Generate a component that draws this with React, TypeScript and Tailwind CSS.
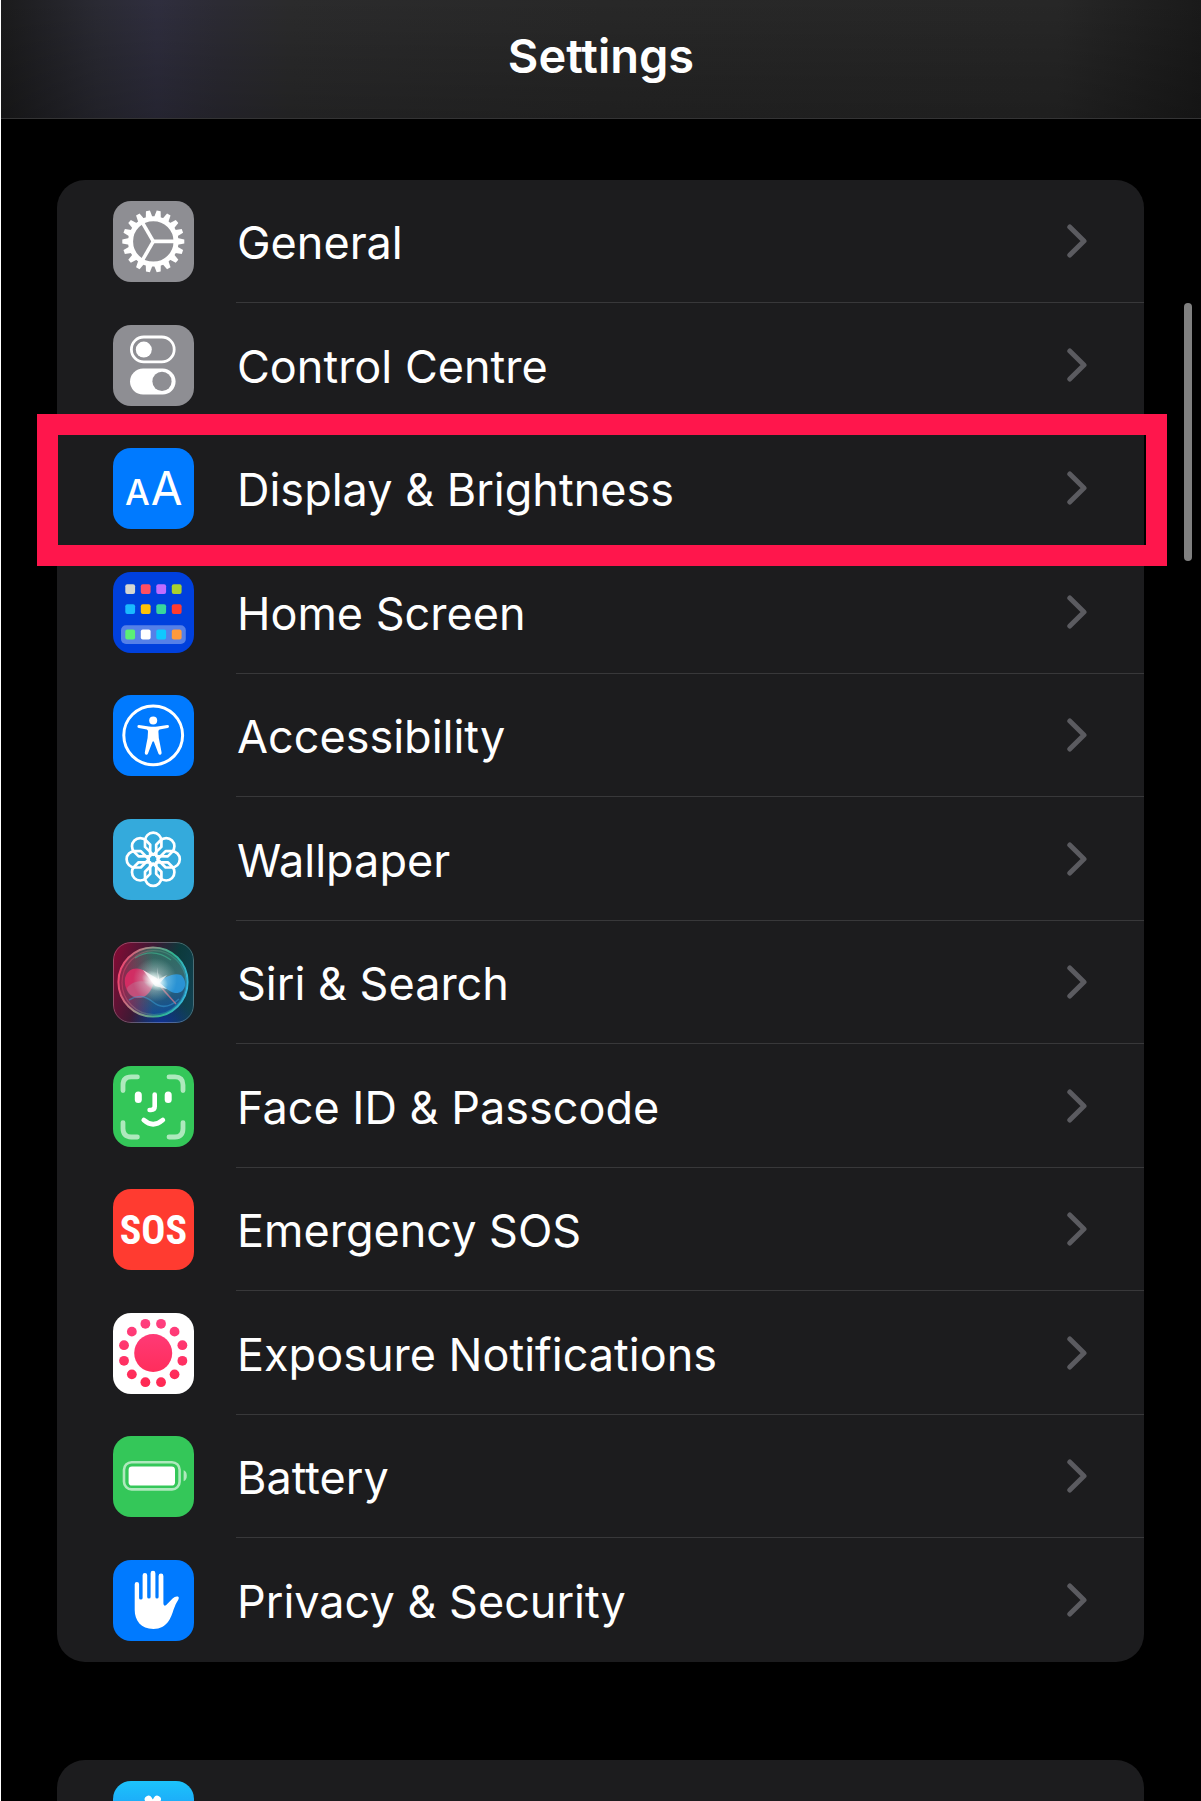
import type { ReactNode } from "react";

const GearIcon = () => (
  <svg viewBox="0 0 81 81" className="size-full">
    <rect width="81" height="81" fill="#8e8e93" />
    <g transform="translate(40.3 40.4)" stroke="#fff" fill="none">
      {Array.from({ length: 18 }, (_, i) => (
        <path key={i} d="M23 -3.6 L31 -2 V2 L23 3.6 Z" fill="#fff" stroke="none" transform={`rotate(${i * 20})`} />
      ))}
      <circle r="22.7" strokeWidth="5" />
      {[0, 120, 240].map((a) => (
        <path key={a} d="M0 0 H22" strokeWidth="3.6" transform={`rotate(${a})`} />
      ))}
    </g>
  </svg>
);

const TogglesIcon = () => (
  <svg viewBox="0 0 81 81" className="size-full">
    <rect width="81" height="81" fill="#8e8e93" />
    <rect x="18.4" y="12" width="42.8" height="24.8" rx="12.4" fill="none" stroke="#fff" strokeWidth="2.8" />
    <circle cx="30.8" cy="24.6" r="8" fill="#fff" />
    <rect x="17" y="43.6" width="45.6" height="26" rx="13" fill="#fff" />
    <circle cx="49" cy="56.4" r="9.6" fill="#8e8e93" />
  </svg>
);

const DisplayIcon = () => (
  <svg viewBox="0 0 81 81" className="size-full">
    <rect width="81" height="81" fill="#007aff" />
    <g fill="#fff" textAnchor="middle" className="font-['Inter',sans-serif]">
      <text x="24.4" y="57" fontSize="35" className="font-medium">A</text>
      <text x="53.6" y="57" fontSize="46">A</text>
    </g>
  </svg>
);

const homeApps = [
  ["#d5d6d1", "#ff4f63", "#bf6cff", "#a9d02f"],
  ["#19b9ff", "#ffc107", "#38d79c", "#ff3b2f"],
  ["#5bf075", "#ffffff", "#10c8ff", "#ff9a3c"],
];

const HomeIcon = () => (
  <svg viewBox="0 0 81 81" className="size-full">
    <rect width="81" height="81" fill="#0040dd" />
    <rect x="8" y="53.2" width="64.8" height="18.8" rx="5" fill="#5580e8" />
    {homeApps.map((row, r) =>
      row.map((color, c) => (
        <rect key={`${r}-${c}`} x={12.3 + c * 15.5} y={[12.3, 32.2, 57.6][r]} width="9.8" height="9.8" rx="2" fill={color} />
      ))
    )}
  </svg>
);

const AccessibilityIcon = () => (
  <svg viewBox="0 0 81 81" className="size-full">
    <rect width="81" height="81" fill="#007aff" />
    <circle cx="40.2" cy="40.3" r="29.4" fill="none" stroke="#fff" strokeWidth="3" />
    <circle cx="40.2" cy="25.4" r="4" fill="#fff" />
    <path
      d="M26 30 L36 31.6 Q40.2 32 44.4 31.6 L54.4 30 Q56 30 56 31.4 Q56 32.8 54.6 33.1 L46.6 34.6 Q45.4 35 45.4 36.4 Q45.4 43 47 49 L48.6 57.6 Q48.8 59.4 47.4 59.7 Q46 60 45.4 58.4 L41 47 Q40.2 45.6 39.4 47 L35 58.4 Q34.4 60 33 59.7 Q31.6 59.4 31.8 57.6 L33.4 49 Q35 43 35 36.4 Q35 35 33.8 34.6 L25.8 33.1 Q24.4 32.8 24.4 31.4 Q24.4 30 26 30 Z"
      fill="#fff"
    />
  </svg>
);

const WallpaperIcon = () => (
  <svg viewBox="0 0 81 81" className="size-full">
    <rect width="81" height="81" fill="#34aadc" />
    <g transform="translate(40.2 40.3)" fill="none" stroke="#fff" strokeWidth="2.7" strokeLinejoin="round">
      {Array.from({ length: 8 }, (_, i) => (
        <path key={i} d="M0 -4.4 L-8.2 -12.4 V-18.4 A8.2 8.2 0 0 1 8.2 -18.4 V-12.4 Z" transform={`rotate(${i * 45})`} />
      ))}
      <circle r="4.8" />
    </g>
  </svg>
);

const SiriIcon = () => (
  <svg viewBox="0 0 81 81" className="size-full">
    <defs>
      <linearGradient id="siriBg" x1="0" y1="0.3" x2="1" y2="0.6">
        <stop offset="0" stopColor="#7d0c34" />
        <stop offset="0.4" stopColor="#3a1a34" />
        <stop offset="0.7" stopColor="#0c3a3c" />
        <stop offset="1" stopColor="#10404f" />
      </linearGradient>
      <linearGradient id="siriBase" x1="0.3" y1="0" x2="0.6" y2="1">
        <stop offset="0" stopColor="#2c7361" />
        <stop offset="0.5" stopColor="#3f7276" />
        <stop offset="1" stopColor="#0f4f9c" />
      </linearGradient>
      <linearGradient id="siriSide" x1="0" y1="0" x2="1" y2="0">
        <stop offset="0" stopColor="#a01a48" stopOpacity="0.9" />
        <stop offset="0.5" stopColor="#a01a48" stopOpacity="0" />
      </linearGradient>
      <linearGradient id="siriRim" x1="0" y1="0.4" x2="1" y2="0.6">
        <stop offset="0" stopColor="#f0446f" />
        <stop offset="0.3" stopColor="#a88c88" />
        <stop offset="0.7" stopColor="#2fb48e" />
        <stop offset="1" stopColor="#35b6df" />
      </linearGradient>
      <radialGradient id="siriGlow">
        <stop offset="0" stopColor="#fff" />
        <stop offset="0.3" stopColor="#fff" stopOpacity="0.85" />
        <stop offset="1" stopColor="#c8fff0" stopOpacity="0" />
      </radialGradient>
      <radialGradient id="siriNavy">
        <stop offset="0" stopColor="#12309a" />
        <stop offset="1" stopColor="#12309a" stopOpacity="0" />
      </radialGradient>
    </defs>
    <rect width="81" height="81" fill="url(#siriBg)" />
    <circle cx="48" cy="84" r="32" fill="url(#siriNavy)" />
    <circle cx="40" cy="40" r="34" fill="url(#siriBase)" fillOpacity="0.85" />
    <circle cx="40" cy="40" r="34" fill="url(#siriSide)" />
    <path d="M41 38 C32 24 16 22 12 36 C10 50 22 60 32 54 C38 50 40 43 41 38 Z" fill="#e22c66" fillOpacity="0.85" />
    <path d="M14 46 C22 36 34 40 41 41 C38 50 34 55 27 56 C19 56 14 52 14 46 Z" fill="#b8708f" fillOpacity="0.5" />
    <path d="M41 41 C52 36 60 30 68 33 C76 40 72 52 62 51 C56 50 52 44 41 41 Z" fill="#2a9be4" fillOpacity="0.85" />
    <path d="M16 58 Q28 50 40 60 T66 57" fill="none" stroke="#37a0d8" strokeOpacity="0.5" strokeWidth="1.6" />
    <path d="M48 45 L63 62 L52 50 Z" fill="#c97a90" stroke="#c97a90" strokeOpacity="0.7" strokeWidth="1.4" />
    <path d="M22 16 Q40 5 58 18" fill="none" stroke="#3fae8b" strokeOpacity="0.7" strokeWidth="1.2" />
    <circle cx="42" cy="38" r="22" fill="url(#siriGlow)" fillOpacity="0.5" />
    <ellipse cx="42" cy="39" rx="14" ry="9" fill="url(#siriGlow)" transform="rotate(28 42 39)" />
    <path d="M30 28 L45 37 L44 25 L46 37 L54 33 L47 41 L54 47 L42 44 Z" fill="#fff" fillOpacity="0.7" />
    <circle cx="40" cy="40" r="34.6" fill="none" stroke="url(#siriRim)" strokeWidth="2" />
    <circle cx="41" cy="40.6" r="32" fill="none" stroke="url(#siriRim)" strokeOpacity="0.4" strokeWidth="1.2" />
    <rect x="0.5" y="0.5" width="80" height="80" rx="17.5" fill="none" stroke="#fff" strokeOpacity="0.25" />
  </svg>
);

const FaceIdIcon = () => (
  <svg viewBox="0 0 81 81" className="size-full">
    <rect width="81" height="81" fill="#34c759" />
    <g fill="none" strokeLinecap="round">
      <path
        d="M10 24.6 V19 Q10 10.9 18.2 10.9 H24.4 M56 10.9 H62 Q70 10.9 70 19 V24.6 M70 56.6 V62.6 Q70 71 62 71 H56 M24.4 71 H18.2 Q10 71 10 62.6 V56.6"
        stroke="#aee9bd"
        strokeWidth="4.8"
      />
      <path d="M41.7 28.6 V40.6 Q41.7 44 38 44 H36.6" stroke="#fff" strokeWidth="4.6" />
      <path d="M30.8 54 Q40 62.4 49.8 54" stroke="#fff" strokeWidth="4.8" />
    </g>
    <rect x="21.8" y="25.6" width="7" height="11.4" rx="3.5" fill="#fff" />
    <rect x="51.7" y="25.6" width="7" height="11.4" rx="3.5" fill="#fff" />
  </svg>
);

const SosIcon = () => (
  <svg viewBox="0 0 81 81" className="size-full">
    <rect width="81" height="81" fill="#ff3b30" />
    <text
      x="40.4"
      y="55"
      fontSize="40"
      textAnchor="middle"
      fill="#fff"
      className="font-['Roboto_Condensed','Roboto',sans-serif] font-bold"
    >
      SOS
    </text>
  </svg>
);

const ExposureIcon = () => (
  <svg viewBox="0 0 81 81" className="size-full">
    <defs>
      <linearGradient id="exposure" gradientUnits="userSpaceOnUse" x1="0" y1="6" x2="0" y2="75">
        <stop offset="0" stopColor="#ff3f80" />
        <stop offset="1" stopColor="#ff2851" />
      </linearGradient>
    </defs>
    <rect width="81" height="81" fill="#fff" />
    <circle cx="40.2" cy="40" r="19" fill="url(#exposure)" />
    {Array.from({ length: 12 }, (_, i) => {
      const a = ((15 + i * 30) * Math.PI) / 180;
      return <circle key={i} cx={40.2 + 30.2 * Math.cos(a)} cy={40 + 30.2 * Math.sin(a)} r="4.9" fill="url(#exposure)" />;
    })}
  </svg>
);

const BatteryIcon = () => (
  <svg viewBox="0 0 81 81" className="size-full">
    <rect width="81" height="81" fill="#34c759" />
    <rect x="11" y="26.2" width="55.6" height="27.2" rx="7.6" fill="none" stroke="#aee9bd" strokeWidth="2.6" />
    <rect x="15.6" y="30.6" width="46.4" height="19" rx="3.4" fill="#fff" />
    <path d="M70.6 34.3 Q73.8 35.6 73.8 39.8 Q73.8 44 70.6 45.3 Z" fill="#aee9bd" />
  </svg>
);

const HandIcon = () => (
  <svg viewBox="0 0 81 81" className="size-full">
    <rect width="81" height="81" fill="#007aff" />
    <path
      d="M21.7 24.2 a2.2 2.2 0 0 1 4.4 0 V38 Q26.1 39.6 27.9 39.6 Q29.6 39.6 29.6 38 V15.2 a2.3 2.3 0 0 1 4.6 0 V37 Q34.2 38.6 35.9 38.6 Q37.6 38.6 37.6 37 V13.2 a2.4 2.4 0 0 1 4.8 0 V37 Q42.4 38.6 44 38.6 Q45.6 38.6 45.6 37 V16 a2.4 2.4 0 0 1 4.8 0 V43.6 Q50.6 46.6 53 45.2 L59.6 38.4 Q62.4 35.8 65 36.6 Q66.6 37.4 65.4 39.6 Q63 43 60.6 49.6 C58 57.6 54.6 69 40.4 69 C28 69 21.7 60.4 21.7 50 Z"
      fill="#fff"
    />
  </svg>
);

const StoreIcon = () => (
  <svg viewBox="0 0 81 81" className="size-full">
    <defs>
      <linearGradient id="store" x1="0" y1="0" x2="0" y2="1">
        <stop offset="0" stopColor="#1cc3fb" />
        <stop offset="1" stopColor="#1d70f2" />
      </linearGradient>
    </defs>
    <rect width="81" height="81" fill="url(#store)" />
    <path d="M35.4 18.4 L56 55 M44.2 18.4 L24 54 M14 48 H44 M56 48 H66 M20 59 L18 62" fill="none" stroke="#fff" strokeWidth="7.4" strokeLinecap="round" />
  </svg>
);

const Chevron = () => (
  <svg viewBox="0 0 20 34" className="h-[34px] w-5 shrink-0" fill="none" stroke="#5b5b60" strokeWidth="5" strokeLinecap="round" strokeLinejoin="round">
    <path d="M2.8 3 L17 17 L2.8 31" />
  </svg>
);

type Item = { label: string; icon: ReactNode; highlighted?: boolean };

const items: Item[] = [
  { label: "General", icon: <GearIcon /> },
  { label: "Control Centre", icon: <TogglesIcon /> },
  { label: "Display & Brightness", icon: <DisplayIcon />, highlighted: true },
  { label: "Home Screen", icon: <HomeIcon /> },
  { label: "Accessibility", icon: <AccessibilityIcon /> },
  { label: "Wallpaper", icon: <WallpaperIcon /> },
  { label: "Siri & Search", icon: <SiriIcon /> },
  { label: "Face ID & Passcode", icon: <FaceIdIcon /> },
  { label: "Emergency SOS", icon: <SosIcon /> },
  { label: "Exposure Notifications", icon: <ExposureIcon /> },
  { label: "Battery", icon: <BatteryIcon /> },
  { label: "Privacy & Security", icon: <HandIcon /> },
];

const IconTile = ({ children }: { children: ReactNode }) => (
  <span className="size-[81px] shrink-0 overflow-hidden rounded-[18px]" aria-hidden="true">
    {children}
  </span>
);

const SettingsRow = ({ item }: { item: Item }) => (
  <li className="group relative h-[123px] even:h-[124px]">
    <button type="button" className="flex h-full w-full items-center gap-[42px] pl-14 text-left">
      <IconTile>{item.icon}</IconTile>
      <span className="flex h-full min-w-0 flex-1 items-center justify-between border-b border-[#38383a] pr-[57px] group-last:border-b-0">
        <span className="pt-1 pl-px text-[45px] leading-[56px] text-white">{item.label}</span>
        <Chevron />
      </span>
    </button>
    {item.highlighted && (
      <div className="pointer-events-none absolute -top-[13px] -right-[23px] -bottom-4 -left-5 z-10 border-[21px] border-[#ff164c]" />
    )}
  </li>
);

export default function App() {
  return (
    <div className="relative h-screen overflow-hidden border-l border-white bg-black font-['Inter',sans-serif]">
      <header className="flex h-[119px] items-center justify-center border-b border-[#343435] bg-[linear-gradient(to_bottom,transparent,rgba(0,0,0,0.22)),linear-gradient(to_right,#1b1b1c_0%,#2a2a33_8%,#2f2e3e_13%,#2c2b34_18%,#2b2b2c_24%,#282828_50%,#272727_88%,#1a1a1a_100%)] pb-[6px]">
        <h1 className="text-[47px] leading-[56px] font-semibold text-white">Settings</h1>
      </header>
      <main className="pt-[61px] pr-[57px] pl-14">
        <ul className="rounded-[28px] bg-[#1c1c1e]">
          {items.map((item) => (
            <SettingsRow key={item.label} item={item} />
          ))}
        </ul>
        <div className="mt-[98px] rounded-[28px] bg-[#1c1c1e]">
          <button type="button" aria-label="App Store" className="flex h-[123px] w-full items-center pl-14">
            <IconTile>
              <StoreIcon />
            </IconTile>
          </button>
        </div>
      </main>
      <div className="absolute top-[303px] right-[9px] h-[258px] w-2 rounded-full bg-[#808080]" />
    </div>
  );
}
